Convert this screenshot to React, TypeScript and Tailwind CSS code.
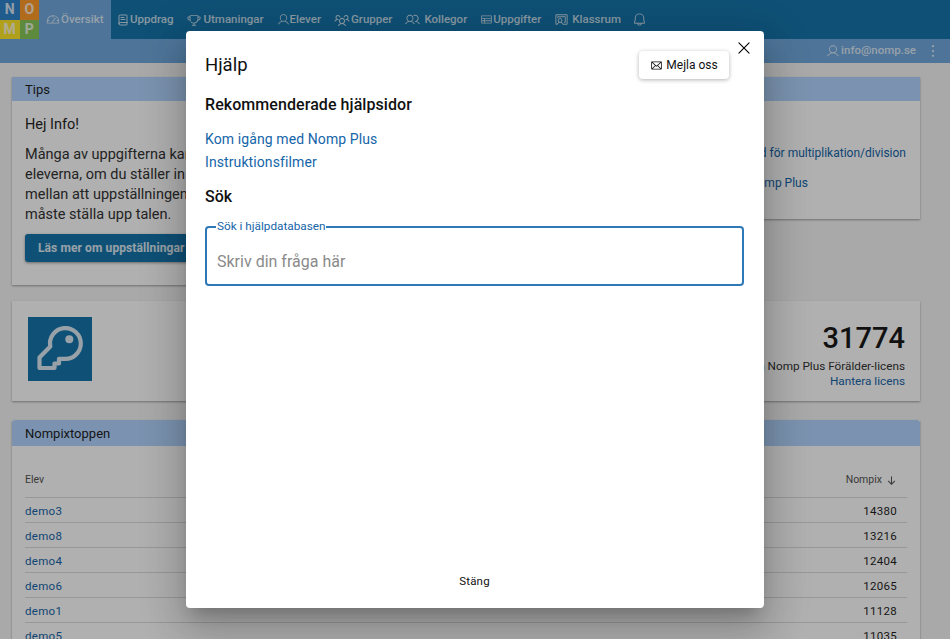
import { BookText } from 'lucide-react';
import { PiGauge, PiTrophy, PiUser, PiUsersThree, PiUsers, PiTable, PiChalkboardTeacher, PiBell, PiDotsThreeVerticalBold, PiEnvelope, PiX, PiArrowDownBold } from 'react-icons/pi';

const navItems = [
  { label: 'Uppdrag', icon: BookText, size: 12, box: 'w-[13px]' },
  { label: 'Utmaningar', icon: PiTrophy, size: 14, box: 'w-[17px]' },
  { label: 'Elever', icon: PiUser, size: 13, box: 'w-[13px]' },
  { label: 'Grupper', icon: PiUsersThree, size: 16, box: 'w-[17px]' },
  { label: 'Kollegor', icon: PiUsers, size: 15, box: 'w-[19px]' },
  { label: 'Uppgifter', icon: PiTable, size: 13, box: 'w-[13px]' },
  { label: 'Klassrum', icon: PiChalkboardTeacher, size: 15, box: 'w-[18px]' },
];

const rows = [
  ['demo3', '14380'],
  ['demo8', '13216'],
  ['demo4', '12404'],
  ['demo6', '12065'],
  ['demo1', '11128'],
  ['demo5', '11035'],
];

function KeyIcon() {
  return (
    <svg viewBox="0 0 64 64" width="64" height="64" fill="none" stroke="currentColor" strokeWidth="4.2" strokeLinejoin="round">
      <path d="M22.3 29.5A15.4 15.4 0 1 1 35.5 41.8L31 41.8L31 46.5L26.5 46.5L26.5 51L11.5 51L11.5 40.5Z" />
      <circle cx="41.3" cy="22.3" r="4" fill="currentColor" stroke="none" />
    </svg>
  );
}

export default function App() {
  return (
    <div className="relative h-[639px] w-[950px] overflow-hidden bg-[#f5f5f5] font-['Roboto',sans-serif] text-[#1f1f1f]">
      {/* Top bar */}
      <header className="flex h-[39px] items-stretch bg-[#1675ac] text-[11.5px] font-medium text-white/75">
        <div className="grid h-[39px] w-[39px] grid-cols-2 grid-rows-2 text-center text-[14px] font-bold leading-[19.5px] text-white/80">
          <span className="bg-[#2d84cb]">N</span>
          <span className="bg-[#ff9b2b]">O</span>
          <span className="bg-[#ffe828]">M</span>
          <span className="bg-[#88c85a]">P</span>
        </div>
        <div className="flex w-[72px] items-center gap-[1px] bg-[#72aade] pl-[7px]">
          <PiGauge size={14} />
          <span>Översikt</span>
        </div>
        <nav className="flex items-center pl-[6px]">
          {navItems.map((item) => (
            <div key={item.label} className="flex items-center pr-[13px]">
              <span className={item.box}>
                <item.icon size={item.size} />
              </span>
              <span>{item.label}</span>
            </div>
          ))}
          <PiBell size={15} className="-ml-[2px]" />
        </nav>
      </header>

      {/* Sub bar */}
      <div className="flex h-[24px] items-center justify-end gap-[8px] bg-[#72aade] pr-[8px] text-[11.5px] font-medium text-white/75">
        <div className="flex items-center gap-[1px]">
          <PiUser size={14} />
          <span>info@nomp.se</span>
        </div>
        <PiDotsThreeVerticalBold size={18} />
      </div>

      <main className="ml-[12px] flex w-[908px] flex-col pt-[14px]">
        <div className="flex h-[208px] items-start gap-[16px]">
          {/* Tips */}
          <section className="h-[208px] flex-1 bg-white shadow-[0_1px_2px_rgba(0,0,0,0.35)]">
            <div className="h-[24px] bg-[#b2d5ff] pl-[13px] text-[13px] leading-[25px]">Tips</div>
            <div className="px-[13px] pt-[14px] text-[14.5px] leading-[20px]">
              <p className="mb-[10px]">Hej Info!</p>
              <p className="whitespace-nowrap text-[#333]">
                Många av uppgifterna kan lösas med uppställning
                <br />
                eleverna, om du ställer in det så kan de välja
                <br />
                mellan att uppställningen visas eller att de
                <br />
                måste ställa upp talen.
              </p>
              <button className="mt-[9px] h-[28px] overflow-hidden whitespace-nowrap rounded-[3px] bg-[#1675ac] px-[13px] text-left text-[12px] font-bold tracking-[0.1px] text-white/85 shadow-[0_1px_3px_rgba(0,0,0,0.4)]">
                Läs mer om uppställningar i Nomp Plus
              </button>
            </div>
          </section>
          {/* Länkar */}
          <section className="h-[142px] w-[260px] bg-white shadow-[0_1px_2px_rgba(0,0,0,0.35)]">
            <div className="h-[24px] bg-[#b2d5ff]" />
            <div className="flex flex-col items-end gap-[14px] whitespace-nowrap pr-[14px] pt-[44px] text-[12px] leading-[16px] text-[#1565a8]">
              <a>Uppställningsmetod för multiplikation/division</a>
              <a className="w-[188px]">Nytt i Nomp Plus</a>
            </div>
          </section>
        </div>

        {/* Licens */}
        <section className="mt-[16px] flex h-[100px] items-start justify-between bg-white p-[16px] pr-[15px] shadow-[0_1px_2px_rgba(0,0,0,0.35)]">
          <div className="bg-[#1675ac] text-white/85">
            <KeyIcon />
          </div>
          <div className="flex flex-col items-end text-[11.75px] leading-[15px]">
            <div className="mb-[3px] mt-[3px] text-[29px] font-medium leading-[36px] text-[#1a1a1a]">31774</div>
            <div className="text-[#333]">Du har en Nomp Plus Förälder-licens</div>
            <a className="text-[#1565a8]">Hantera licens</a>
          </div>
        </section>

        {/* Nompixtoppen */}
        <section className="mt-[19px] bg-white shadow-[0_1px_2px_rgba(0,0,0,0.35)]">
          <div className="h-[26px] rounded-t-[3px] bg-[#b2d5ff] pl-[13px] text-[13px] leading-[27px]">Nompixtoppen</div>
          <div className="mx-[13px] pt-[25px]">
            <div className="flex h-[27px] items-center justify-between border-b border-[#ddd] pb-[11px] pr-[10px] pt-[3px] text-[10.5px] text-[#555]">
              <span>Elev</span>
              <span className="flex items-center gap-[4px]">
                Nompix <PiArrowDownBold size={11} />
              </span>
            </div>
            {rows.map(([name, points]) => (
              <div key={name} className="flex h-[25px] items-center justify-between border-b border-[#ddd] pr-[10px] pt-[3px] text-[11.5px] tracking-[0.3px]">
                <a className="text-[#1565a8]">{name}</a>
                <span>{points}</span>
              </div>
            ))}
          </div>
        </section>
      </main>

      {/* Overlay */}
      <div className="absolute inset-0 bg-[rgba(0,0,0,0.31)]" />

      {/* Help dialog */}
      <div className="absolute left-[186px] top-[31px] flex h-[577px] w-[578px] flex-col rounded-[4px] bg-white pl-[19px] pr-[20px] shadow-[0_11px_15px_-7px_rgba(0,0,0,0.2),0_24px_38px_3px_rgba(0,0,0,0.14),0_9px_46px_8px_rgba(0,0,0,0.12)]">
        <button className="absolute right-[11px] top-[8px] text-black">
          <PiX size={18} />
        </button>
        <div className="flex h-[48px] items-end justify-between pr-[15px]">
          <h2 className="text-[18.5px] leading-[27px] text-[#111]">Hjälp</h2>
          <button className="flex h-[28px] w-[90px] items-center justify-center gap-[3px] rounded-[4px] bg-white text-[12px] text-[#111] shadow-[0_1px_4px_rgba(0,0,0,0.3)]">
            <PiEnvelope size={13} />
            Mejla oss
          </button>
        </div>
        <h3 className="mt-[15px] text-[16px] font-medium leading-[22px] tracking-[0.07px] text-[#111]">Rekommenderade hjälpsidor</h3>
        <div className="mt-[12px] flex flex-col text-[14px] leading-[23px] tracking-[0.1px] text-[#1565a8]">
          <a>Kom igång med Nomp Plus</a>
          <a>Instruktionsfilmer</a>
        </div>
        <h3 className="mt-[12px] text-[16px] font-medium leading-[22px] text-[#111]">Sök</h3>
        <div className="relative mt-[18px] flex h-[60px] items-center rounded-[4px] border-2 border-[#2f78b8] pl-[10px] pt-[12px]">
          <span className="absolute left-[9px] top-[-9px] bg-white px-[1px] text-[11.75px] leading-[14px] text-[#1565a8]">Sök i hjälpdatabasen</span>
          <span className="text-[16px] text-[#8a8a8a]">Skriv din fråga här</span>
        </div>
        <div className="flex-1" />
        <button className="mb-[18px] self-center text-[11.5px] tracking-[0.2px] text-[#111]">Stäng</button>
      </div>
    </div>
  );
}
